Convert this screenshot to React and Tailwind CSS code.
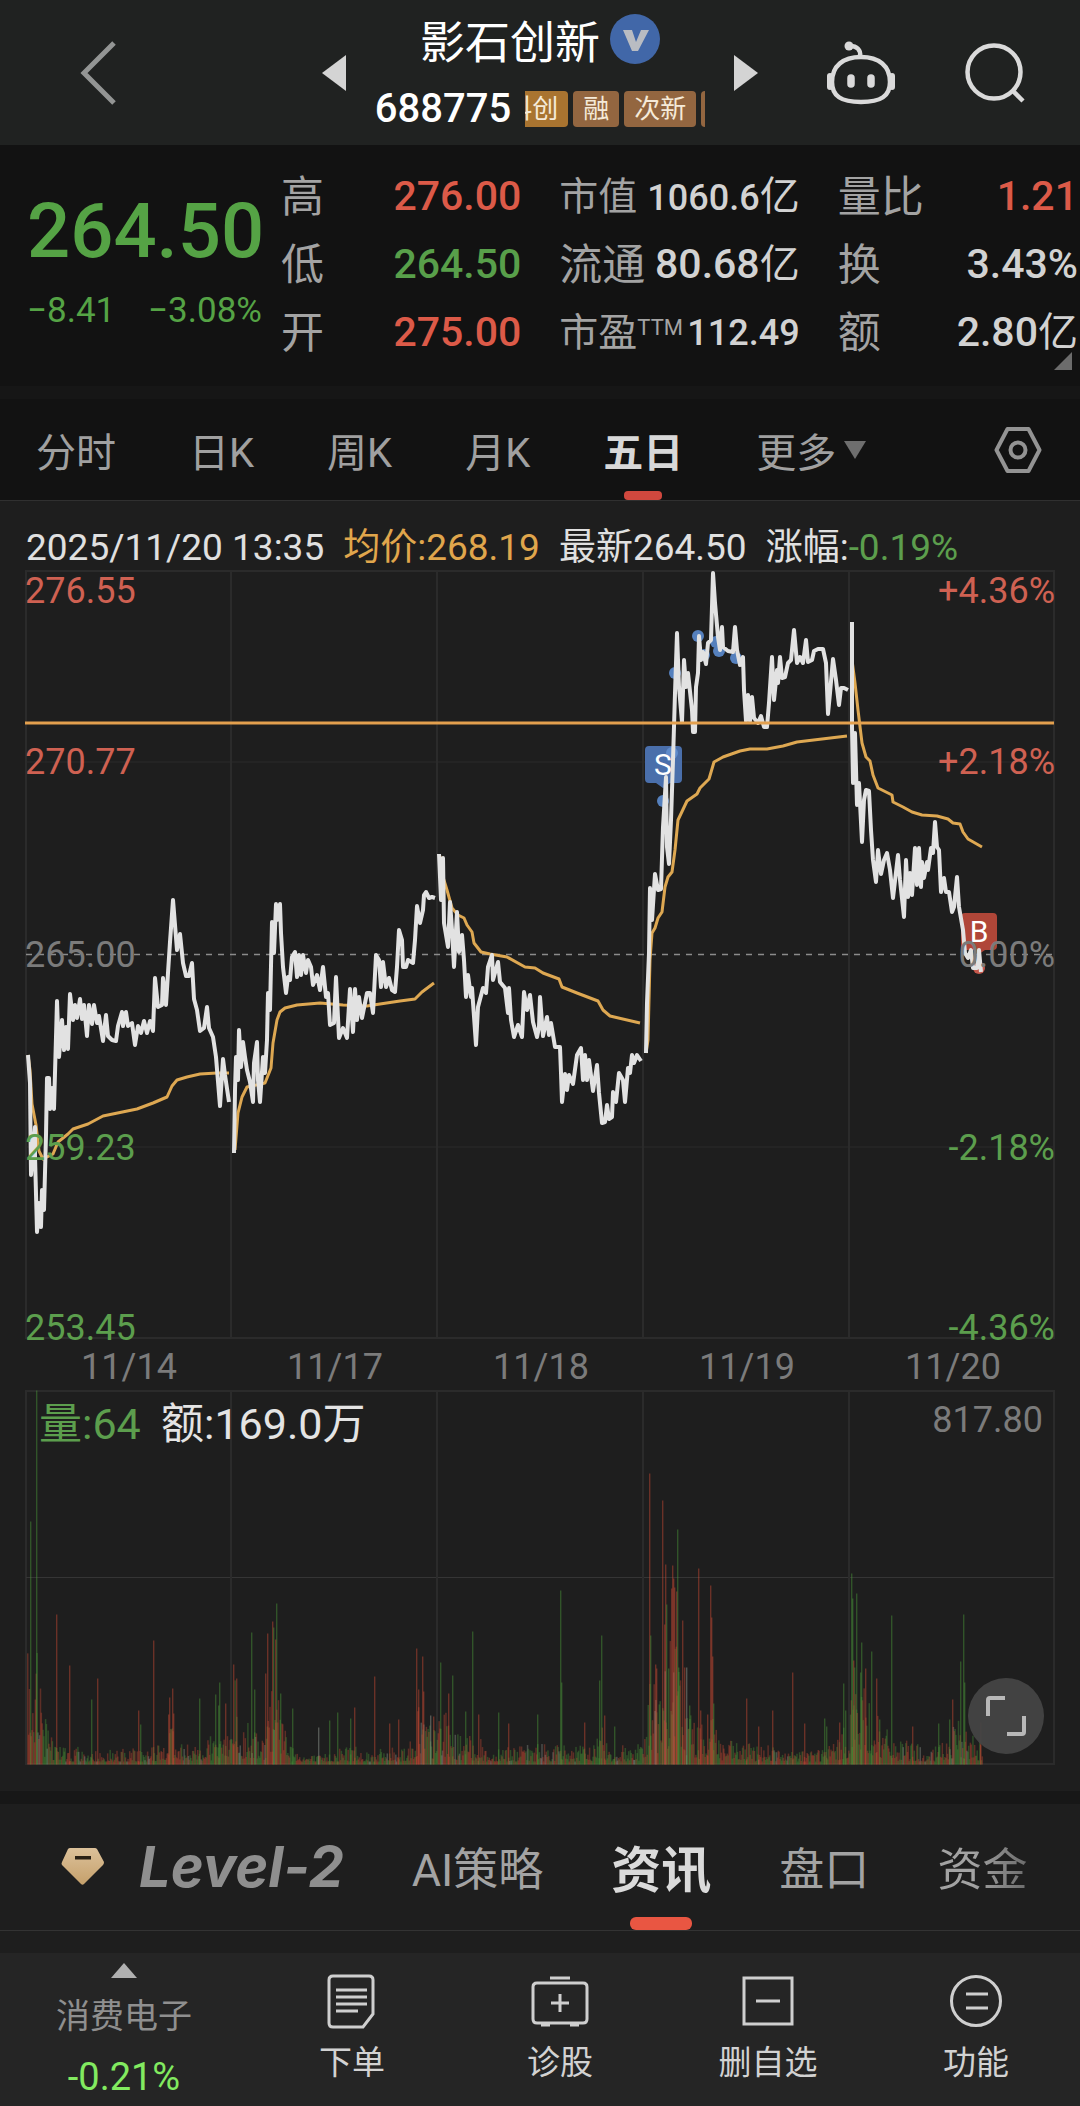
import React, { useState } from 'react';

const COLUMNS = [
  [
    { label: '高', value: '276.00', color: 'text-[#dc5a48]' },
    { label: '低', value: '264.50', color: 'text-[#589f4a]' },
    { label: '开', value: '275.00', color: 'text-[#dc5a48]' },
  ],
  [
    { label: '市值', value: '1060.6亿', small: true },
    { label: '流通', value: '80.68亿' },
    { label: '市盈', sup: 'TTM', value: '112.49', small: true },
  ],
  [
    { label: '量比', value: '1.21', color: 'text-[#dc5a48]' },
    { label: '换', value: '3.43%' },
    { label: '额', value: '2.80亿' },
  ],
];

const PERIODS = ['分时', '日K', '周K', '月K', '五日'];

const PRICE = [
  '28,1055 30,1083 31,1175 35,1127 35,1156 37,1232 39,1203 41,1227 42,1190 44,1210 46,1135 47,1078 49,1078 50,1109 52,1088 54,1109 57,1001 59,1057 62,1020 64,1050 66,1027 68,1049 70,994 73,1020 75,1005 77,1018 80,999 82,1019 84,1005 87,1036 89,1005 92,1024 94,1005 97,1023 99,1016 103,1041 106,1015 108,1036 112,1040 116,1041 118,1026 122,1012 123,1026 126,1012 128,1026 132,1023 135,1045 138,1026 141,1033 144,1021 147,1033 150,1021 153,1031 155,978 158,1007 162,1005 163,978 166,1005 168,973 170,942 173,900 177,950 180,934 183,963 186,976 189,976 192,963 194,999 197,1010 200,1031 204,1028 207,1007 209,1028 213,1037 216,1057 220,1106 223,1059 225,1075 229,1102',
  '234,1153 235,1090 236,1057 238,1080 239,1030 241,1067 243,1042 245,1057 247,1070 250,1082 253,1102 254,1063 257,1042 258,1080 260,1102 263,1057 265,1073 267,1040 268,993 270,1010 272,922 274,953 276,904 277,920 280,904 281,933 283,967 286,993 288,977 290,980 292,957 295,952 297,977 299,955 301,975 303,955 306,973 308,960 311,967 313,985 317,975 320,990 323,967 326,997 328,993 330,1025 334,1023 336,977 339,1038 343,1028 347,1038 350,989 353,1032 355,989 357,1020 359,997 362,1018 367,993 370,993 373,1013 376,955 379,960 381,987 383,962 386,987 389,978 392,990 395,992 397,967 399,930 402,940 403,967 406,967 408,960 413,963 415,940 417,906 420,923 423,910 424,895 426,892 429,898 432,897 435,898',
  '439,854 441,900 443,858 444,923 448,947 450,902 452,930 454,967 457,912 459,952 462,935 464,960 466,997 468,975 471,997 472,988 476,1045 478,1007 483,988 486,993 488,967 492,955 493,980 498,962 500,982 505,988 508,1013 509,988 511,1020 514,1037 518,1025 522,1037 524,992 527,1010 530,995 533,1022 537,1037 539,1027 540,997 543,1036 547,1017 549,1035 551,1023 555,1047 560,1047 561,1073 562,1102 565,1074 567,1090 569,1075 573,1084 577,1055 581,1048 583,1080 585,1055 587,1080 589,1060 593,1091 597,1065 599,1093 602,1123 605,1122 607,1105 609,1119 612,1117 613,1092 616,1102 619,1073 623,1080 625,1102 628,1068 630,1073 632,1055 634,1063 637,1055 641,1061',
  '646,1053 647,1003 649,953 650,888 652,920 655,874 658,890 661,889 663,827 666,777 667,847 669,864 671,820 673,760 675,693 677,633 679,687 682,722 684,660 686,687 688,673 692,710 693,732 695,732 696,687 698,673 699,636 701,660 703,652 706,664 708,643 711,640 713,573 715,603 718,637 720,650 722,627 723,647 728,651 733,652 735,627 737,650 740,665 743,657 744,690 746,721 748,695 750,721 752,697 754,718 758,723 761,716 764,727 767,727 769,703 772,657 774,700 777,670 778,683 780,657 782,678 785,677 788,663 791,660 794,630 797,663 800,657 803,663 806,640 808,662 812,660 814,651 818,649 823,649 826,663 828,714 830,693 833,659 836,680 839,705 841,688 844,688 848,690',
  '852,622 852,727 853,783 855,733 857,805 859,783 862,842 864,800 866,790 869,791 871,830 873,860 876,882 878,850 881,874 884,860 887,853 890,870 893,898 898,855 900,880 904,917 906,860 908,897 910,873 912,895 915,848 917,885 919,848 921,887 922,862 924,878 927,862 928,870 931,848 933,853 935,822 937,847 939,850 941,892 944,878 946,892 949,892 952,912 954,907 957,877 959,907 963,930 965,953 968,958 971,950 973,968 977,968 979,950 981,972',
];

const AVERAGE = [
  '28,1055 30,1070 32,1104 36,1125 39,1151 43,1159 53,1154 58,1142 68,1134 73,1129 88,1124 103,1116 137,1109 153,1103 167,1097 172,1086 177,1080 187,1077 200,1074 217,1073 229,1073',
  '235,1150 238,1113 242,1097 247,1087 265,1083 271,1068 273,1043 277,1020 280,1012 285,1008 297,1005 320,1003 343,1005 367,1006 380,1004 400,1001 415,999 422,992 434,983',
  '440,856 443,877 447,890 452,908 458,915 464,918 467,925 472,932 474,943 481,952 490,954 507,957 525,967 535,968 543,973 559,979 562,987 577,993 598,1001 603,1010 610,1016 640,1023',
  '646,1053 648,1040 650,960 652,933 655,928 658,918 662,912 665,887 668,877 672,872 675,850 678,820 687,801 697,794 700,788 709,779 714,762 723,757 740,751 750,749 767,749 783,746 797,742 847,736',
  '852,630 852,660 855,683 858,710 862,743 866,757 870,761 873,775 878,788 892,795 893,802 903,807 912,812 922,815 937,816 948,819 953,823 960,824 963,832 968,839 982,847',
];

const TRADES = [[675, 673], [698, 636], [704, 655], [716, 642], [719, 651], [736, 658], [672, 753], [663, 801]];

// x, height, side (r = up, g = down, w = flat)
const SPIKES = [
  [31, 243, 'g'], [37, 374, 'g'], [57, 150, 'r'], [70, 99, 'r'], [92, 65, 'g'], [98, 86, 'r'], [139, 54, 'r'], [141, 40, 'g'],
  [154, 124, 'r'], [169, 50, 'r'], [170, 67, 'r'], [173, 76, 'r'], [174, 51, 'r'], [200, 66, 'g'], [216, 70, 'g'], [219, 59, 'g'],
  [220, 82, 'g'], [226, 61, 'r'], [234, 100, 'r'], [237, 86, 'r'], [252, 132, 'g'], [255, 75, 'g'], [266, 91, 'r'], [268, 131, 'r'],
  [273, 143, 'r'], [274, 137, 'g'], [276, 125, 'r'], [277, 161, 'g'], [281, 71, 'g'], [293, 56, 'g'], [319, 37, 'w'], [330, 44, 'g'],
  [338, 52, 'g'], [351, 46, 'g'], [355, 57, 'r'], [375, 88, 'r'], [390, 41, 'r'], [399, 45, 'r'], [417, 116, 'r'], [419, 75, 'r'],
  [423, 108, 'r'], [424, 73, 'r'], [431, 49, 'w'], [434, 48, 'r'], [441, 102, 'g'], [449, 71, 'r'], [453, 89, 'g'], [466, 53, 'g'],
  [473, 133, 'g'], [479, 50, 'r'], [499, 52, 'g'], [509, 41, 'r'], [538, 50, 'g'], [561, 174, 'g'], [562, 82, 'g'], [585, 42, 'r'],
  [600, 84, 'g'], [602, 129, 'g'], [605, 49, 'r'], [615, 38, 'g'], [650, 291, 'r'], [651, 129, 'g'], [656, 100, 'r'], [657, 96, 'r'],
  [663, 264, 'r'], [665, 140, 'r'], [666, 200, 'r'], [667, 160, 'g'], [669, 96, 'g'], [672, 176, 'r'], [673, 199, 'r'], [674, 186, 'r'],
  [675, 177, 'r'], [677, 173, 'r'], [678, 235, 'g'], [679, 97, 'g'], [683, 144, 'r'], [685, 97, 'r'], [687, 97, 'w'], [690, 59, 'g'],
  [699, 196, 'r'], [701, 54, 'r'], [708, 50, 'r'], [711, 179, 'r'], [712, 147, 'r'], [713, 108, 'r'], [714, 61, 'g'], [747, 66, 'r'],
  [759, 38, 'r'], [773, 54, 'r'], [793, 92, 'r'], [805, 41, 'r'], [825, 46, 'g'], [827, 38, 'g'], [840, 42, 'r'], [844, 81, 'g'],
  [846, 54, 'g'], [852, 191, 'g'], [853, 166, 'g'], [854, 104, 'r'], [855, 97, 'g'], [857, 171, 'g'], [861, 92, 'g'], [862, 122, 'g'],
  [866, 96, 'r'], [872, 113, 'g'], [877, 86, 'r'], [880, 45, 'g'], [892, 149, 'g'], [913, 38, 'r'], [939, 41, 'g'], [950, 45, 'g'],
  [953, 65, 'r'], [961, 103, 'g'], [964, 150, 'g'], [965, 82, 'g'], [981, 42, 'r'],
];

// typical turnover along the axis
const ENVELOPE = [
  [27, 110], [38, 110], [42, 50], [52, 22], [60, 18], [100, 12], [130, 14], [150, 16], [165, 20], [171, 50], [178, 20],
  [200, 14], [215, 30], [222, 38], [230, 20], [234, 80], [240, 35], [255, 40], [264, 25], [272, 80], [280, 60], [286, 22],
  [300, 10], [320, 8], [350, 20], [370, 12], [395, 16], [412, 22], [418, 60], [425, 45], [433, 30], [440, 55], [455, 28],
  [480, 22], [490, 10], [500, 20], [520, 16], [540, 20], [560, 18], [590, 16], [600, 35], [612, 14], [625, 18], [640, 24],
  [645, 30], [650, 85], [660, 65], [675, 130], [682, 65], [700, 32], [712, 60], [720, 22], [750, 18], [770, 20], [785, 10],
  [800, 14], [825, 16], [840, 26], [847, 40], [851, 80], [870, 60], [880, 35], [900, 20], [915, 22], [925, 8], [940, 20],
  [960, 40], [968, 28], [982, 24],
];

const SIDE_COLOR = { r: '#d04a35', g: '#4a9a38', w: '#9aa39a' };

function envelopeAt(x) {
  const i = ENVELOPE.findIndex((p) => p[0] >= x);
  if (i <= 0) return ENVELOPE[0][1];
  const [x0, y0] = ENVELOPE[i - 1];
  const [x1, y1] = ENVELOPE[i];
  return y0 + ((y1 - y0) * (x - x0)) / (x1 - x0);
}

function buildVolume() {
  const bars = [];
  let seed = 688775;
  const rand = () => {
    seed = (seed * 1103515245 + 12345) % 2147483648;
    return seed / 2147483648;
  };
  for (let x = 27; x < 982; x += 0.85) {
    const h = Math.max(3, envelopeAt(x) * (0.16 + rand() ** 1.6));
    const k = rand();
    bars.push([x, h, k < 0.48 ? 'r' : k < 0.94 ? 'g' : 'w']);
  }
  return bars;
}

const VOLUME = buildVolume();

function Header() {
  return (
    <header className="grid h-[145px] grid-cols-[1fr_auto_1fr] items-center bg-[#202221]">
      <button aria-label="返回" className="ml-[78px] w-10">
        <svg viewBox="0 0 40 66" className="w-10" fill="none" stroke="#939594" strokeWidth="5">
          <path d="M36 3 6 33l30 30" />
        </svg>
      </button>

      <div className="flex w-[436px] items-center justify-between">
        <button aria-label="上一只">
          <svg viewBox="0 0 24 36" className="h-9 w-6" fill="#d4d4d4"><path d="M24 0v36L0 18z" /></svg>
        </button>
        <div className="flex flex-col items-center">
          <div className="flex h-[72px] items-center gap-2.5 pb-2">
            <h1 className="text-[45px] leading-[50px] text-white">影石创新</h1>
            <svg viewBox="0 0 50 50" className="mb-2.5 size-[50px]">
              <circle cx="25" cy="25" r="25" fill="#4167a8" />
              <path d="M13 16h9l4 12 5-12h8L28 37h-6z" fill="#b9bcc2" />
            </svg>
          </div>
          <div className="flex items-center gap-3.5">
            <span className="text-[40px] leading-[50px] font-medium text-white">688775</span>
            <div className="flex w-[180px] gap-[5px] overflow-hidden text-[26px] leading-9 text-[#f5ead8]">
              <span className="-ml-[29px] shrink-0 rounded bg-[#a97430] px-2.5">科创</span>
              <span className="shrink-0 rounded bg-[#936640] px-2.5">融</span>
              <span className="shrink-0 rounded bg-[#936640] px-2.5">次新</span>
              <span className="w-4 shrink-0 rounded bg-[#936640]" />
            </div>
          </div>
        </div>
        <button aria-label="下一只">
          <svg viewBox="0 0 24 36" className="h-9 w-6" fill="#d4d4d4"><path d="M0 0v36l24-18z" /></svg>
        </button>
      </div>

      <div className="flex items-center justify-end gap-[68px] pr-[54px]">
        <button aria-label="智能助手">
          <svg viewBox="0 0 70 64" className="w-[70px]" fill="none" stroke="#dadada" strokeWidth="4.5">
            <path d="M35 16C53 16 64 25 64 41c0 14-9 20-29 20S6 55 6 41C6 25 17 16 35 16z" />
            <path d="M34 15c1-6-3-10-10-10" />
            <circle cx="23" cy="5" r="4.5" fill="#dadada" stroke="none" />
            <path d="M25 37v6M45 37v6" strokeWidth="7.5" strokeLinecap="round" />
            <path d="M4 35v11M66 35v11" strokeWidth="6" strokeLinecap="round" />
          </svg>
        </button>
        <button aria-label="搜索">
          <svg viewBox="0 0 62 62" className="w-[62px]" fill="none" stroke="#dadada" strokeWidth="4.5">
            <circle cx="30" cy="30" r="26.5" />
            <path d="m48 48 11 11" />
          </svg>
        </button>
      </div>
    </header>
  );
}

function Quote() {
  return (
    <section className="relative flex h-[241px] bg-[#121212] pt-[18px] pr-0.5 pl-[27px]">
      <div className="w-[235px] font-medium text-[#55a345]">
        <div className="pt-4 text-[76px] leading-[104px]">264.50</div>
        <div className="flex justify-between text-[35px] leading-[56px] font-normal">
          <span>−8.41</span>
          <span>−3.08%</span>
        </div>
      </div>
      {COLUMNS.map((col, i) => (
        <dl key={i} className={`min-w-0 flex-1 ${i === 0 ? 'ml-[19px]' : 'ml-[38px]'}`}>
          {col.map((c) => (
            <div key={c.label} className="flex h-[68px] items-center justify-between whitespace-nowrap">
              <dt className={`text-[#a3a3a3] ${c.small ? 'text-[39px]' : 'text-[43px]'}`}>
                {c.label}
                {c.sup && <sup className="text-[22px]">{c.sup}</sup>}
              </dt>
              <dd className={`font-medium ${c.small ? 'text-[36px]' : 'text-[41px]'} ${c.color || 'text-[#d2d2d2]'}`}>
                {c.value.replace('亿', '')}
                {c.value.endsWith('亿') && <span className="text-[40px] font-normal">亿</span>}
              </dd>
            </div>
          ))}
        </dl>
      ))}
      <svg viewBox="0 0 18 18" className="absolute right-2 bottom-4 size-[18px]" fill="#6c6c6c"><path d="M18 0v18H0z" /></svg>
    </section>
  );
}

function PeriodTabs() {
  const [active, setActive] = useState('五日');
  return (
    <nav className="flex h-[102px] items-center gap-[73px] border-b border-[#303030] bg-[#121212] pr-[38px] pl-9 text-[40px] text-[#a0a0a0]">
      {PERIODS.map((p) => (
        <button
          key={p}
          onClick={() => setActive(p)}
          className={`relative h-full pt-2 whitespace-nowrap ${p === active ? 'font-bold text-[#d8d8d8]' : ''}`}
        >
          {p}
          {p === active && <span className="absolute bottom-0 left-1/2 h-[9px] w-[38px] -translate-x-1/2 rounded bg-[#d0483e]" />}
        </button>
      ))}
      <button className="flex items-center gap-2 pt-2 whitespace-nowrap">
        更多
        <svg viewBox="0 0 22 18" className="mb-2 w-[22px]" fill="#6e6e6e"><path d="M0 0h22L11 18z" /></svg>
      </button>
      <button aria-label="设置" className="ml-auto">
        <svg viewBox="0 0 48 48" className="w-12" fill="none" stroke="#939393" strokeWidth="4">
          <path d="M13.5 3h21l11 21-11 21h-21l-11-21z" strokeLinejoin="round" />
          <circle cx="24" cy="24" r="7.5" />
        </svg>
      </button>
    </nav>
  );
}

function Chart() {
  const cols = [231, 437, 643, 849];
  const dates = ['11/14', '11/17', '11/18', '11/19', '11/20'];
  const levels = [
    [603, '276.55', '+4.36%', '#cf6152'],
    [774, '270.77', '+2.18%', '#cf6152'],
    [967, '265.00', '0.00%', '#7b7b7b'],
    [1160, '259.23', '-2.18%', '#5c9e4d'],
    [1340, '253.45', '-4.36%', '#5c9e4d'],
  ];

  return (
    <section className="relative bg-[#1e1e1e]">
      <div className="flex h-[69px] items-end gap-[19px] pl-[26px] text-[37px] leading-[44px] whitespace-nowrap text-[#e0e0e0]">
        <span>2025/11/20 13:35</span>
        <span className="text-[#e0a64c]">均价:268.19</span>
        <span>最新264.50</span>
        <span>涨幅:<span className="text-[#5c9e4d]">-0.19%</span></span>
      </div>

      <svg viewBox="0 570 1080 1221" className="block w-full" fontSize="36">
        {/* grid */}
        <g fill="none" stroke="#2b2b2b" strokeWidth="2">
          <rect x="26" y="571" width="1028" height="767" />
          <rect x="26" y="1391" width="1028" height="373" />
          <path d="M26 762H1054M26 1147H1054" strokeWidth="1" />
          <path d="M26 1577.5H1054" stroke="#353535" strokeWidth="1" />
          {cols.map((x) => <path key={x} d={`M${x} 571V1338M${x} 1391V1764`} />)}
        </g>
        <path d="M26 954.5H1054" stroke="#8b8b8b" strokeWidth="1.5" strokeDasharray="6 6" />

        {/* volume */}
        <g>
          {VOLUME.map(([x, h, side], i) => (
            <rect key={i} x={x} y={1764.5 - h} width="1.5" height={h} fill={SIDE_COLOR[side]} opacity="0.36" />
          ))}
          {SPIKES.map(([x, h, side], i) => (
            <rect key={i} x={x - 1} y={1764.5 - h} width="1.4" height={h} fill={SIDE_COLOR[side]} opacity="0.44" />
          ))}
        </g>

        {/* trade markers */}
        <g fill="#5580bd">
          {TRADES.map(([x, y]) => <circle key={`${x}-${y}`} cx={x} cy={y} r="6" />)}
        </g>
        <path d="M649 746h29a4 4 0 0 1 4 4v29a4 4 0 0 1-4 4h-8l-7 5-7-5h-7a4 4 0 0 1-4-4v-29a4 4 0 0 1 4-4z" fill="#4a6fab" />
        <circle cx="672" cy="753" r="6" fill="#5f8bcb" />
        <circle cx="979" cy="968" r="6" fill="#c5584c" />
        <path d="M965 913h28a4 4 0 0 1 4 4v29a4 4 0 0 1-4 4h-8l-6 4-6-4h-8a4 4 0 0 1-4-4v-29a4 4 0 0 1 4-4z" fill="#b04638" />

        <g fill="none" stroke="#dea852" strokeWidth="3" strokeLinejoin="round">
          {AVERAGE.map((pts) => <polyline key={pts} points={pts} />)}
        </g>
        <g fill="none" stroke="#e2e2e2" strokeWidth="4" strokeLinejoin="round">
          {PRICE.map((pts) => <polyline key={pts} points={pts} />)}
        </g>
        <path d="M25 723H1054" stroke="#e3a04e" strokeWidth="3" />
        <g fill="#ffffff" fontSize="30" textAnchor="middle">
          <text x="663" y="775">S</text>
          <text x="979" y="942">B</text>
        </g>

        {levels.map(([y, price, pct, color]) => (
          <g key={price} fill={color}>
            <text x="25" y={y}>{price}</text>
            <text x="1055" y={y} textAnchor="end">{pct}</text>
          </g>
        ))}
        <g fill="#7b7b7b" textAnchor="middle">
          {dates.map((d, i) => <text key={d} x={129 + i * 206} y="1379">{d}</text>)}
        </g>
        <g fontSize="43">
          <text x="39" y="1439" fill="#5c9e4d">量:64</text>
          <text x="161" y="1439" fill="#e4e4e4">额:169.0万</text>
        </g>
        <text x="1043" y="1432" textAnchor="end" fill="#7b7b7b">817.80</text>
      </svg>

      <button aria-label="全屏" className="absolute right-9 bottom-[37px] flex size-[76px] items-center justify-center rounded-full bg-[#454545]/95">
        <svg viewBox="0 0 40 40" className="w-10" fill="none" stroke="#b8b8b8" strokeWidth="4">
          <path d="M2 20V4q0-2 2-2h15M38 20v16q0 2-2 2H21" />
        </svg>
      </button>
    </section>
  );
}

function InfoTabs() {
  return (
    <nav className="flex h-[127px] items-center gap-[68px] overflow-hidden border-b border-[#333] bg-[#1e1e1e] pl-[61px] text-[45px] whitespace-nowrap text-[#a3a3a3]">
      <button className="flex items-center gap-[35px] text-[#8f8f8f]">
        <svg viewBox="0 0 43 38" className="w-[43px]">
          <defs>
            <linearGradient id="gem" x1="0" y1="0" x2="0" y2="1">
              <stop offset="0" stopColor="#dcc19a" />
              <stop offset="1" stopColor="#c5a06b" />
            </linearGradient>
          </defs>
          <path d="M9 0h25q1 0 2 1l7 13q0 2-1 3L23 36q-1.5 1.5-3 0L1 17q-1-1 0-3L7 1q1-1 2-1z" fill="url(#gem)" />
          <path d="M14 8h16v3.5H14z" fill="#2a2115" />
        </svg>
        <span className="font-['Inter',sans-serif] text-[56px] font-bold italic">Level-2</span>
      </button>
      <button className="pt-2">AI策略</button>
      <button className="relative h-full pt-2 text-[50px] font-bold text-[#dadada]">
        资讯
        <span className="absolute bottom-0 left-1/2 h-[13px] w-[62px] -translate-x-1/2 rounded-md bg-[#e95642]" />
      </button>
      <button className="pt-2">盘口</button>
      <button className="bg-linear-to-r from-[#a3a3a3] from-40% to-[#6c6c6c] bg-clip-text pt-2 text-transparent">资金</button>
    </nav>
  );
}

function BottomBar() {
  const items = [
    {
      label: '下单',
      icon: <path d="M9 3h36q4 0 4 4v34L39 54H9q-4 0-4-4V7q0-4 4-4zM12 17h31M12 24h31M12 31h31M12 38h22" />,
    },
    {
      label: '诊股',
      icon: <path d="M18 5h20M5 10h46q4 0 4 4v32q0 4-4 4H5q-4 0-4-4V14q0-4 4-4zM28 21v18M19 30h18M9 52h9M38 52h9" />,
    },
    { label: '删自选', icon: <path d="M4 5h48v46H4zM16 28h24" /> },
    { label: '功能', icon: <><circle cx="28" cy="28" r="24.5" /><path d="M18 21h22M18 35h22" /></> },
  ];
  return (
    <footer className="grid h-[153px] grid-cols-[248fr_208fr_208fr_208fr_208fr] bg-[#252525]">
      <button className="flex flex-col items-center pt-2.5">
        <svg viewBox="0 0 26 15" className="w-[26px]" fill="#b0b0b0"><path d="M13 0l13 15H0z" /></svg>
        <span className="mt-3 text-[34px] leading-[52px] text-[#8f8f8f]">消费电子</span>
        <span className="mt-2.5 text-[38px] leading-[50px] text-[#82ea60]">-0.21%</span>
      </button>
      {items.map((it) => (
        <button key={it.label} className="flex flex-col items-center pt-5">
          <svg viewBox="0 0 56 56" className="size-14" fill="none" stroke="#cfcfcf" strokeWidth="3" overflow="visible">{it.icon}</svg>
          <span className="mt-2 text-[33px] leading-[52px] text-[#d2d2d2]">{it.label}</span>
        </button>
      ))}
    </footer>
  );
}

export default function App() {
  return (
    <div className="w-full bg-[#171717] font-['Roboto','Noto_Sans_CJK_SC',sans-serif]">
      <Header />
      <Quote />
      <div className="h-[13px] bg-[#161616]" />
      <PeriodTabs />
      <Chart />
      <div className="h-[13px] bg-[#171717]" />
      <InfoTabs />
      <div className="h-[22px] bg-[#1e1e1e]" />
      <BottomBar />
    </div>
  );
}
